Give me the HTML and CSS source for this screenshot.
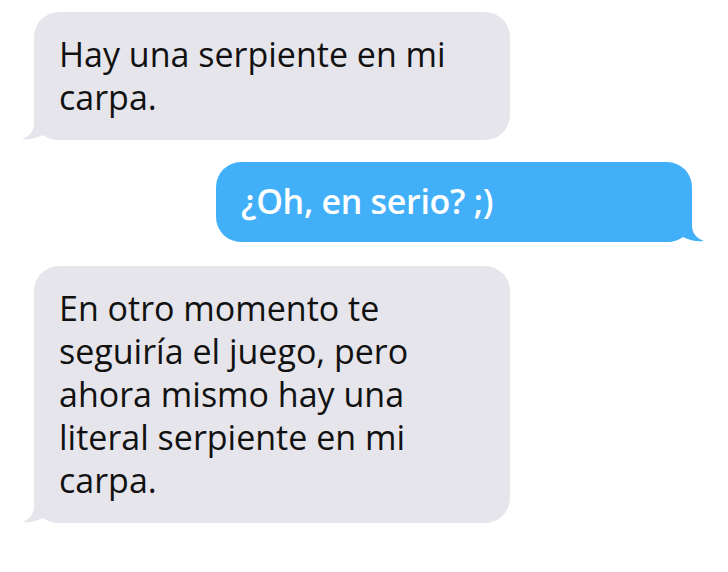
FILE: index.html
```html
<!DOCTYPE html>
<html lang="es">
<head>
    <meta charset="UTF-8">
    <meta name="viewport" content="width=device-width, initial-scale=1.0">
    <title>Mensajes</title>
    <link rel="stylesheet" href="styles.css">
</head>
<body>
    <div class="chat">
        <div class="msg received">
            <p>Hay una serpiente en mi carpa.</p>
            <svg class="tail" viewBox="0 0 40 30"><path d="M13 0 L13 14 C13 22 7 27 1 29 C9 30 16 28 22 25 C26 28 32 30 40 30 L40 0 Z"/></svg>
        </div>

        <div class="msg sent">
            <p>¿Oh, en serio? ;)</p>
            <svg class="tail" viewBox="0 0 40 30"><path d="M13 0 L13 14 C13 22 7 27 1 29 C9 30 16 28 22 25 C26 28 32 30 40 30 L40 0 Z"/></svg>
        </div>

        <div class="msg received last">
            <p>En otro momento te seguiría el juego, pero ahora mismo hay una literal serpiente en mi carpa.</p>
            <svg class="tail" viewBox="0 0 40 30"><path d="M13 0 L13 14 C13 22 7 27 1 29 C9 30 16 28 22 25 C26 28 32 30 40 30 L40 0 Z"/></svg>
        </div>
    </div>
</body>
</html>
```

FILE: styles.css
```css
body {
    margin: 0;
    background: #ffffff;
    font-family: "Open Sans", "DejaVu Sans", sans-serif;
}
.chat {
    display: flex;
    flex-direction: column;
    padding: 12px 36px 0 34px;
}
.msg {
    position: relative;
    box-sizing: border-box;
    width: 476px;
    border-radius: 25px;
    padding: 21px 25px;
}
.msg p {
    margin: 0;
    font-size: 34px;
    line-height: 43px;
}
.tail {
    position: absolute;
    bottom: 0;
    width: 40px;
    height: 30px;
}
.received {
    background: #e6e5eb;
    color: #111111;
}
.received .tail {
    left: -13px;
    fill: #e6e5eb;
}
.sent {
    align-self: flex-end;
    margin-top: 22px;
    padding: 18px 25px 19px;
    background: #42b0f9;
    color: #ffffff;
}
.sent p {
    font-weight: 600;
    letter-spacing: -0.3px;
}
.sent .tail {
    right: -13px;
    fill: #42b0f9;
    transform: scaleX(-1);
}
.last {
    margin-top: 24px;
}
```
